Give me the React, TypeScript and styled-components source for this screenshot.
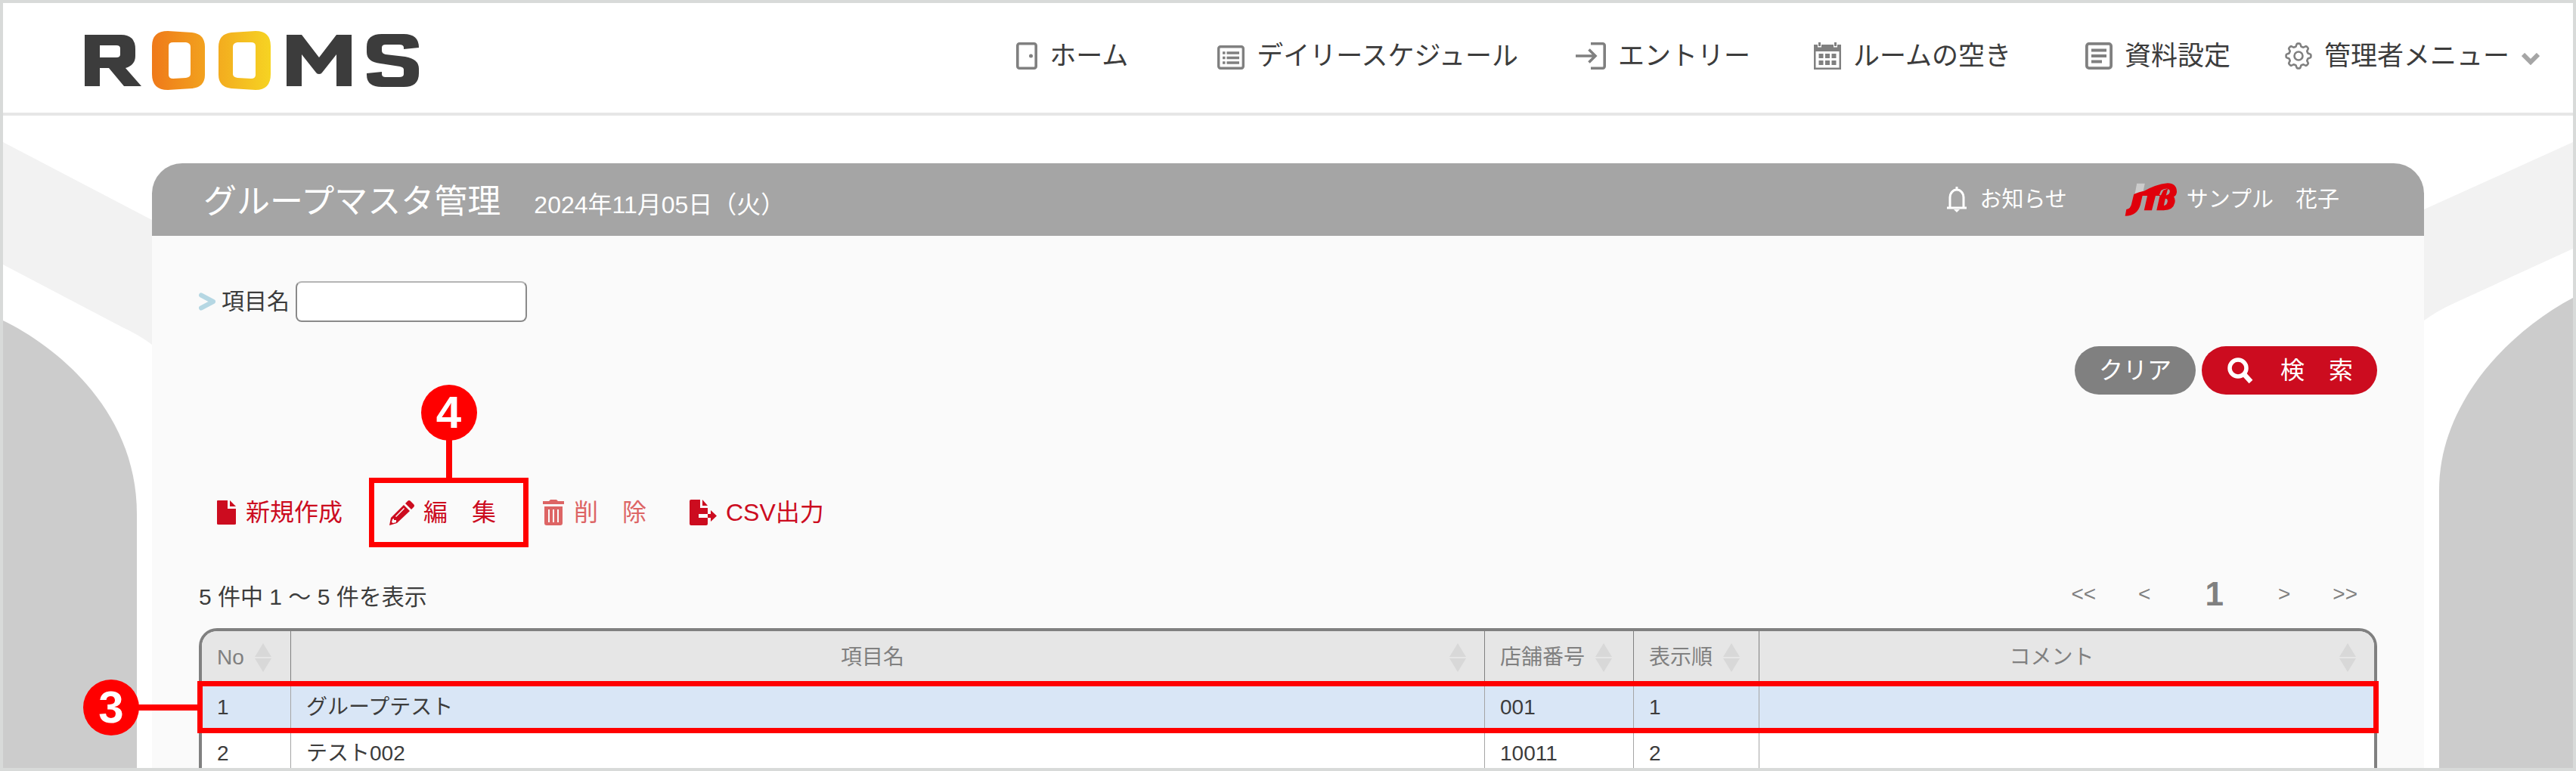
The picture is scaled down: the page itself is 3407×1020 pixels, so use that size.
import React from "react";
import styled, { createGlobalStyle, css } from "styled-components";

const Global = createGlobalStyle`
  *, *::before, *::after { box-sizing: border-box; }
  html, body, #root { height: 100%; }
  body {
    margin: 0;
    overflow: hidden;
    background: #fff;
    color: #3c3c3c;
    font-family: "Liberation Sans", "Noto Sans CJK JP", sans-serif;
  }
  button, input { font: inherit; }
`;

const Frame = styled.div`
  position: relative;
  display: flex;
  flex-direction: column;
  height: 100vh;
  border: 4px solid #d8dad9;
  overflow: hidden;
`;

const Header = styled.header`
  flex: none;
  display: flex;
  align-items: center;
  height: 149px;
  padding: 0 44px 6px 108px;
  border-bottom: 4px solid #e6e6e6;
`;

const Logo = styled.svg`
  display: block;
  width: 444px;
  height: 80px;
  margin-top: 14px;
`;

const Nav = styled.nav`
  display: flex;
  align-items: center;
  margin-left: auto;
`;

const NavItem = styled.a<{ $after: number }>`
  display: flex;
  align-items: center;
  margin-right: ${(p) => p.$after}px;
  color: #3c3c3c;
  font-size: 35px;
  line-height: 44px;
  text-decoration: none;
  white-space: nowrap;
`;

const NavIcon = styled.svg<{ $w: number }>`
  flex: none;
  width: ${(p) => p.$w}px;
  height: 36px;
  margin-right: 16px;
`;

const Chevron = styled.svg`
  width: 24px;
  height: 16px;
  margin: 8px 0 0 16px;
`;

const Stage = styled.div`
  position: relative;
  flex: 1;
  min-height: 0;
  display: flex;
  padding: 63px 197px 0;
`;

const Side = styled.svg<{ $right?: boolean }>`
  position: absolute;
  top: 0;
  ${(p) => (p.$right ? css`right: 0;` : css`left: 0;`)}
  width: 197px;
  height: 863px;
`;

const Panel = styled.main`
  position: relative;
  flex: 1;
  min-width: 0;
  background: #fafafa;
  border-radius: 40px 40px 0 0;
`;

const PanelHead = styled.div`
  display: flex;
  align-items: center;
  height: 96px;
  padding: 0 112px 0 68px;
  border-radius: 40px 40px 0 0;
  background: #a5a5a5;
  color: #fff;
`;

const Title = styled.h1`
  margin: 6px 0 0;
  font-size: 44px;
  line-height: 60px;
  font-weight: 400;
`;

const DateText = styled.time`
  margin: 14px 0 0 44px;
  font-size: 32px;
  line-height: 44px;
`;

const Account = styled.div`
  display: flex;
  align-items: center;
  margin-left: auto;
  font-size: 29px;
  line-height: 44px;
`;

const Notice = styled.a`
  display: flex;
  align-items: center;
  gap: 16px;
  margin-right: 76px;
  color: inherit;
  text-decoration: none;
`;

const Bell = styled.svg`
  width: 28px;
  height: 34px;
`;

const Jtb = styled.svg`
  width: 70px;
  height: 46px;
  margin-right: 12px;
`;

const Content = styled.div`
  padding: 60px 62px 0;
`;

const Field = styled.label`
  display: flex;
  align-items: center;
  gap: 8px;
  font-size: 30px;
  line-height: 44px;
`;

const Marker = styled.svg`
  width: 22px;
  height: 24px;
`;

const TextBox = styled.input`
  width: 306px;
  height: 54px;
  padding: 0 12px;
  border: 2px solid #8a8a8a;
  border-top-color: #b5b5b5;
  border-radius: 8px;
  background: #fff;
`;

const SearchActions = styled.div`
  display: flex;
  justify-content: flex-end;
  gap: 8px;
  margin-top: 32px;
`;

const Pill = styled.button<{ $primary?: boolean }>`
  display: flex;
  align-items: center;
  height: 64px;
  padding: 0 32px;
  border: 0;
  border-radius: 32px;
  background: ${(p) => (p.$primary ? "#cc0c1f" : "#808080")};
  color: #fff;
  font-size: 32px;
  line-height: 44px;
  white-space: pre;
`;

const SearchIcon = styled.svg`
  width: 36px;
  height: 36px;
  margin-right: 36px;
`;

const Toolbar = styled.div`
  display: flex;
  align-items: center;
  height: 92px;
  margin-top: 110px;
`;

const Tool = styled.button<{ $width: number; $muted?: boolean }>`
  position: relative;
  display: flex;
  align-items: center;
  align-self: stretch;
  width: ${(p) => p.$width}px;
  padding: 0 0 0 24px;
  border: 0;
  background: none;
  color: ${(p) => (p.$muted ? "#dd6565" : "#cc0c1f")};
  font-size: 32px;
  line-height: 44px;
  white-space: pre;
`;

const ToolIcon = styled.svg<{ $w: number }>`
  flex: none;
  width: ${(p) => p.$w}px;
  height: 34px;
  margin-right: 12px;
`;

const EditMark = styled.span`
  position: absolute;
  inset: 0 -6px 0 -2px;
  border: 7px solid #f00;
  pointer-events: none;
`;

const Callout = styled.span<{ $side: "top" | "left" }>`
  position: absolute;
  display: flex;
  align-items: center;
  justify-content: center;
  width: 74px;
  height: 74px;
  border-radius: 50%;
  background: #f00;
  color: #fff;
  font-size: 60px;
  line-height: 60px;
  font-weight: 700;
  ${(p) => (p.$side === "top"
    ? css`bottom: calc(100% + 56px); left: calc(50% - 37px);`
    : css`right: calc(100% + 84px); top: calc(50% - 37px);`)}

  &::after {
    content: "";
    position: absolute;
    background: #f00;
    ${(p) => (p.$side === "top"
      ? css`top: 72px; left: 33px; width: 8px; height: 54px;`
      : css`left: 72px; top: 33px; width: 82px; height: 8px;`)}
  }
`;

const ListBar = styled.div`
  display: flex;
  align-items: center;
  justify-content: space-between;
  height: 60px;
  margin-top: 32px;
`;

const Count = styled.p`
  margin: 8px 0 0;
  font-size: 30px;
  line-height: 44px;
`;

const Pager = styled.nav`
  display: flex;
  align-items: center;
  margin-right: 26px;
  color: #808080;
`;

const PageLink = styled.button<{ $current?: boolean }>`
  padding: 0;
  margin-left: ${(p) => (p.$current ? 72 : 56)}px;
  margin-right: ${(p) => (p.$current ? 16 : 0)}px;
  border: 0;
  background: none;
  color: #808080;
  font-size: ${(p) => (p.$current ? 44 : 28)}px;
  line-height: 44px;
  font-weight: ${(p) => (p.$current ? 700 : 400)};
`;

const TableBox = styled.div`
  margin-top: 15px;
  border: 4px solid #808080;
  border-bottom: 0;
  border-radius: 24px 24px 0 0;
  background: #fff;
`;

const Table = styled.table`
  width: 100%;
  table-layout: fixed;
  border-collapse: separate;
  border-spacing: 0;
  font-size: 28px;
  line-height: 44px;
`;

const Th = styled.th<{ $w?: string; $center?: boolean }>`
  width: ${(p) => p.$w ?? "auto"};
  height: 70px;
  padding: 0 24px 0 20px;
  border-left: 1px solid #808080;
  background: #e6e6e6;
  color: #808080;
  font-weight: 400;
  text-align: ${(p) => (p.$center ? "center" : "left")};
  white-space: nowrap;
  &:first-child { border-left: 0; border-top-left-radius: 20px; }
  &:last-child { border-top-right-radius: 20px; }
`;

const HeadCell = styled.div<{ $center?: boolean }>`
  display: flex;
  align-items: center;
  span { flex: ${(p) => (p.$center ? "1" : "none")}; }
  svg { flex: none; width: 22px; height: 38px; margin-left: 14px; }
`;

const Row = styled.tr<{ $selected?: boolean }>`
  background: ${(p) => (p.$selected ? "#d9e6f6" : "#fff")};
  ${(p) => p.$selected && css`position: relative; z-index: 1;`}
`;

const Td = styled.td`
  height: 61px;
  padding: 0 20px;
  border-left: 1px solid #a5a5a5;
  &:first-child { border-left: 0; }
`;

const RowMark = styled.span`
  position: absolute;
  inset: -4px -6px;
  border: 7px solid #f00;
  pointer-events: none;
`;

const Sort = () => (
  <svg viewBox="0 0 22 38" aria-hidden="true">
    <path d="M11 0 22 18H0zM11 38 0 20h22z" fill="#d8d8d8" />
  </svg>
);

const G = "#808080";

const HomeIcon = () => (
  <NavIcon $w={28} viewBox="0 0 28 36" fill="none" stroke={G} strokeWidth="3.600">
    <rect x="1.800" y="1.800" width="24.400" height="32.400" rx="2.500" />
    <circle cx="19.500" cy="18" r="2.500" fill={G} stroke="none" />
  </NavIcon>
);
const ListIcon = () => (
  <NavIcon $w={36} viewBox="0 0 36 36" fill="none" stroke={G} strokeWidth="3.400">
    <rect x="1.700" y="5.700" width="32.600" height="28.600" rx="2.500" />
    <path d="M12.500 14H29M12.500 20.500H29M12.500 27H29M7 14h3.500M7 20.500h3.500M7 27h3.500" />
  </NavIcon>
);
const EntryIcon = () => (
  <NavIcon $w={40} viewBox="0 0 40 36" fill="none" stroke={G} strokeWidth="3.600">
    <path d="M20 1.800H35.800a2.400 2.400 0 0 1 2.400 2.400V31.800a2.400 2.400 0 0 1-2.400 2.400H20M0 18H26M17.500 9.500 26 18 17.500 26.500" />
  </NavIcon>
);
const CalendarIcon = () => (
  <NavIcon $w={36} viewBox="0 0 36 36" fill={G}>
    <path d="M0 3h5v3.500h5V3h16v3.500h5V3h5v33H0zM2.500 12v21.500h31V12z" fillRule="evenodd" />
    <path d="M6 0h3v5H6zM27 0h3v5h-3zM6.500 15h6v6h-6zM15 15h6v6h-6zM23.500 15h6v6h-6zM6.500 24h6v6h-6zM15 24h6v6h-6zM23.500 24h6v6h-6z" />
  </NavIcon>
);
const DocIcon = () => (
  <NavIcon $w={36} viewBox="0 0 36 36" fill="none" stroke={G} strokeWidth="3.800">
    <rect x="1.900" y="1.900" width="32.200" height="32.200" rx="3" />
    <path d="M8 10.500H28M8 18H28M8 25.500H22" />
  </NavIcon>
);

const gearPath = (() => {
  const pts: string[] = [];
  for (let i = 0; i < 96; i++) {
    const a = (i / 96) * Math.PI * 2;
    const r = 14.6 + 1.9 * Math.tanh(2.2 * Math.cos(8 * a));
    pts.push(`${(18 + r * Math.sin(a)).toFixed(2)} ${(18 - r * Math.cos(a)).toFixed(2)}`);
  }
  return `M${pts.join("L")}Z`;
})();

const GearIcon = () => (
  <NavIcon $w={36} viewBox="0 0 36 36" fill="none" stroke={G} strokeWidth="2.600">
    <path d={gearPath} />
    <circle cx="18" cy="18" r="5.500" />
  </NavIcon>
);

const RoomsLogo = () => (
  <Logo viewBox="0 0 444 80" role="img" aria-label="ROOMS">
    <defs>
      <linearGradient id="oo" gradientUnits="userSpaceOnUse" x1="90" x2="247" y1="0" y2="0">
        <stop offset="0" stopColor="#ef7a1a" />
        <stop offset="1" stopColor="#f6d423" />
      </linearGradient>
    </defs>
    <g fill="#3c3c3c" fillRule="evenodd">
      <path d="M0 5H48Q67 5 67 24V33Q67 45 54 49L75 73H52L32 49H20V73H0ZM20 19V35H42Q47 35 47 31V23Q47 19 42 19Z" />
      <path d="M267 73V5H287L310 35 333 5H353V73H333V31L314 55Q313 57 310 57 307 57 306 55L287 31V73Z" />
      <path d="M442 22 422 24V22Q422 18 416 18H398Q393 18 393 22V26Q393 30 398 31L424 34Q442 37 442 50V56Q442 74 422 74H393Q373 74 373 58V56L393 54V57Q393 61 398 61H416Q422 61 422 57V51Q422 48 417 47L391 43Q373 41 373 28V21Q373 4 393 4H422Q442 4 442 22Z" />
    </g>
    <g fill="url(#oo)" fillRule="evenodd">
      <path d="M110 0 142 2Q159 4 159 21V58Q159 74 142 76L110 78Q89 78 89 57V20Q89 0 110 0ZM117 15Q111 15 111 20V58Q111 63 117 63L134 62Q140 61 140 57V21Q140 16 134 15Z" />
      <path d="M226 0 194 2Q177 4 177 21V58Q177 74 194 76L226 78Q246 78 246 57V20Q246 0 226 0ZM220 15Q226 15 226 20V58Q226 63 220 63L202 62Q196 61 196 57V21Q196 16 202 15Z" />
    </g>
  </Logo>
);

const rows = [
  { no: 1, name: "グループテスト", shop: "001", order: 1, comment: "" },
  { no: 2, name: "テスト002", shop: "10011", order: 2, comment: "" },
];

export default function App() {
  return (
    <Frame>
      <Global />
      <Header>
        <RoomsLogo />
        <Nav>
          <NavItem href="#home" $after={118}><HomeIcon />ホーム</NavItem>
          <NavItem href="#daily" $after={76}><ListIcon />デイリースケジュール</NavItem>
          <NavItem href="#entry" $after={84}><EntryIcon />エントリー</NavItem>
          <NavItem href="#rooms" $after={98}><CalendarIcon />ルームの空き</NavItem>
          <NavItem href="#docs" $after={72}><DocIcon />資料設定</NavItem>
          <NavItem href="#admin" $after={0}>
            <GearIcon />管理者メニュー
            <Chevron viewBox="0 0 24 16" fill="none" stroke="#a5a5a5" strokeWidth="6">
              <path d="M2 2 12 12 22 2" />
            </Chevron>
          </NavItem>
        </Nav>
      </Header>

      <Stage>
        <Side viewBox="0 0 197 863" preserveAspectRatio="none" aria-hidden="true">
          <path d="M0 35 197 138V303Q180 290 158 280L0 197Z" fill="#f2f2f2" />
          <path d="M0 271C70 305 177 390 177 527V863H0Z" fill="#ccc" />
        </Side>
        <Side $right viewBox="0 0 197 863" preserveAspectRatio="none" aria-hidden="true">
          <path d="M197 35 0 124V271Q18 258 40 248L197 176Z" fill="#f2f2f2" />
          <path d="M197 241C105 290 20 385 20 495V863H197Z" fill="#ccc" />
        </Side>

        <Panel>
          <PanelHead>
            <Title>グループマスタ管理</Title>
            <DateText dateTime="2024-11-05">2024年11月05日（火）</DateText>
            <Account>
              <Notice href="#notice">
                <Bell viewBox="0 0 28 34" fill="none" stroke="#fff" strokeWidth="3">
                  <path d="M14 0v4M5 28V14a9 10 0 0 1 18 0V28M1 28H27" />
                  <path d="M10 30h8l-4 4z" fill="#fff" stroke="none" />
                </Bell>
                お知らせ
              </Notice>
              <Jtb viewBox="748 40 212 138" role="img" aria-label="JTB">
                <path d="M797 45H829L822 78 788 92Z" fill="#ccc" />
                <g fill="#e0000b" fillRule="evenodd">
                  <path d="M750 175 755 148Q772 147 776 125L785 88Q800 80 824 75L811 130Q800 173 750 175Z" />
                  <path d="M820 78Q870 48 920 43 957 44 957 78 956 93 945 98 952 106 949 122 942 152 905 152H876L889 94H872L857 152H826L839 94H816ZM921 67 914 92Q927 90 929 78 930 67 921 67ZM911 105 905 133Q917 131 920 117 921 105 911 105ZM893 92 903 72 921 65Q905 64 894 73L887 90Z" />
                </g>
              </Jtb>
              <span>サンプル　花子</span>
            </Account>
          </PanelHead>

          <Content>
            <Field>
              <Marker viewBox="0 0 22 24" fill="none" stroke="#b5d7e3" strokeWidth="6" strokeLinecap="round" strokeLinejoin="round">
                <path d="M3 3.500 19 12 3 20.500" />
              </Marker>
              項目名
              <TextBox type="text" name="itemName" />
            </Field>

            <SearchActions>
              <Pill type="button">クリア</Pill>
              <Pill type="button" $primary>
                <SearchIcon viewBox="0 0 36 36" fill="none" stroke="#fff" strokeWidth="5.500">
                  <circle cx="16" cy="15" r="11" />
                  <path d="M23 22 33 33" strokeWidth="6.500" />
                </SearchIcon>
                検　索
              </Pill>
            </SearchActions>

            <Toolbar>
              <Tool type="button" $width={227}>
                <ToolIcon $w={26} viewBox="0 0 26 34" fill="#cc0c1f">
                  <path d="M1 1H14V12H25V32Q25 33 23 33H2Q0 33 0 32V2Q0 1 1 1ZM17 1 25 9H17Z" />
                </ToolIcon>
                新規作成
              </Tool>
              <Tool type="button" $width={203}>
                <ToolIcon $w={34} viewBox="0 0 34 34" fill="#cc0c1f" fillRule="evenodd">
                  <path d="M25 2Q27 0 29 2L33 6Q35 8 33 10L30 13 22 5ZM20 7 28 15 11 31 1 34 3 24ZM5 26 4 30 6 31 10 30V27H7V25ZM9 22 20 11 21 12 10 23Z" />
                </ToolIcon>
                編　集
                <EditMark>
                  <Callout $side="top">4</Callout>
                </EditMark>
              </Tool>
              <Tool type="button" $width={195} $muted>
                <ToolIcon $w={30} viewBox="0 0 30 34" fill="#dd6565" fillRule="evenodd">
                  <path d="M1 2H9L11 0H19L21 2H29V6H1ZM3 9H27V31Q27 34 24 34H6Q3 34 3 31ZM8 13V30H10V13ZM14 13V30H16V13ZM20 13V30H22V13Z" />
                </ToolIcon>
                削　除
              </Tool>
              <Tool type="button" $width={220}>
                <ToolIcon $w={36} viewBox="0 0 36 34" fill="#cc0c1f" fillRule="evenodd">
                  <path d="M2 0H14V11H24V19H12V24H24V32Q24 34 22 34H2Q0 34 0 32V2Q0 0 2 0ZM17 0 24 8H17ZM24 19H28V14L36 21.500 28 29V24H24Z" />
                </ToolIcon>
                CSV出力
              </Tool>
            </Toolbar>

            <ListBar>
              <Count>5 件中 1 〜 5 件を表示</Count>
              <Pager aria-label="ページ">
                <PageLink type="button">&lt;&lt;</PageLink>
                <PageLink type="button">&lt;</PageLink>
                <PageLink type="button" $current>1</PageLink>
                <PageLink type="button">&gt;</PageLink>
                <PageLink type="button">&gt;&gt;</PageLink>
              </Pager>
            </ListBar>

            <TableBox>
              <Table>
                <thead>
                  <tr>
                    <Th $w="117px"><HeadCell><span>No</span><Sort /></HeadCell></Th>
                    <Th $center><HeadCell $center><span>項目名</span><Sort /></HeadCell></Th>
                    <Th $w="197px"><HeadCell><span>店舗番号</span><Sort /></HeadCell></Th>
                    <Th $w="166px"><HeadCell><span>表示順</span><Sort /></HeadCell></Th>
                    <Th $w="814px" $center><HeadCell $center><span>コメント</span><Sort /></HeadCell></Th>
                  </tr>
                </thead>
                <tbody>
                  {rows.map((r, i) => (
                    <Row key={r.no} $selected={i === 0}>
                      <Td>
                        {r.no}
                        {i === 0 && (
                          <RowMark>
                            <Callout $side="left">3</Callout>
                          </RowMark>
                        )}
                      </Td>
                      <Td>{r.name}</Td>
                      <Td>{r.shop}</Td>
                      <Td>{r.order}</Td>
                      <Td>{r.comment}</Td>
                    </Row>
                  ))}
                </tbody>
              </Table>
            </TableBox>
          </Content>
        </Panel>
      </Stage>
    </Frame>
  );
}
